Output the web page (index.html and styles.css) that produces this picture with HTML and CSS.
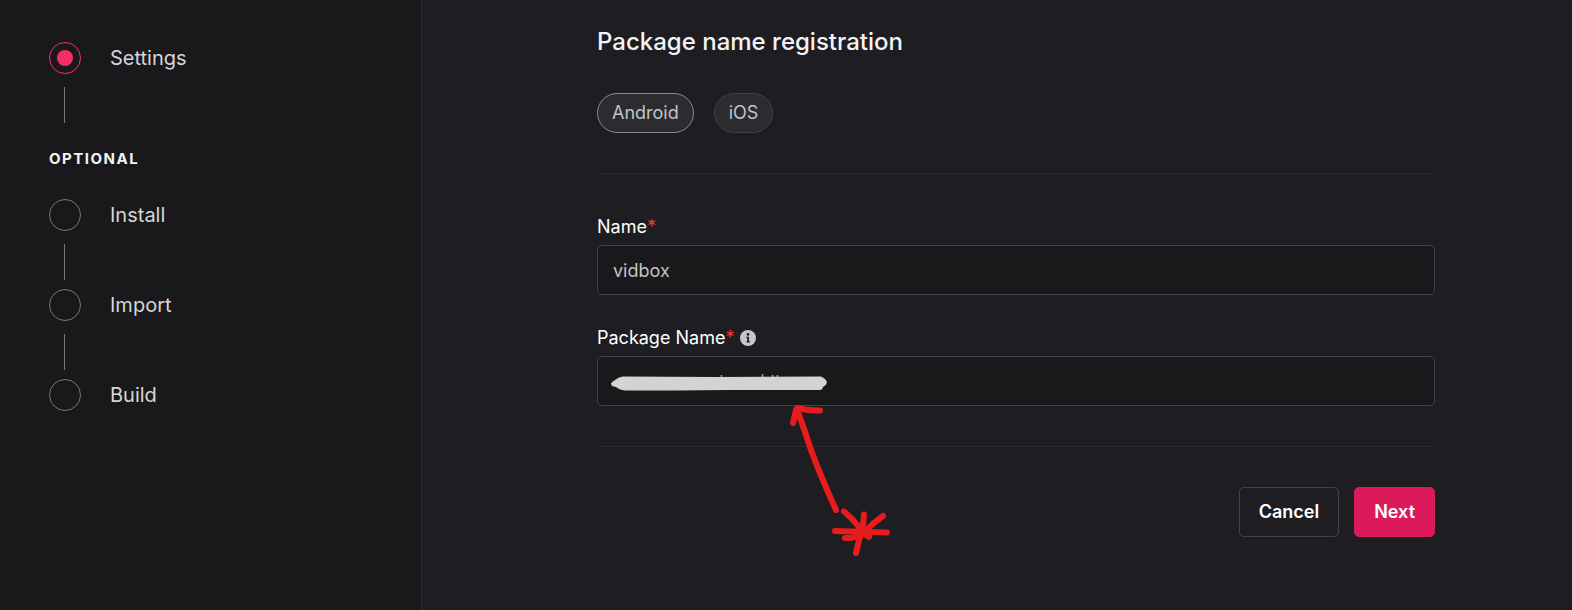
FILE: index.html
```html
<!DOCTYPE html>
<html lang="en">
<head>
<meta charset="utf-8">
<meta name="viewport" content="width=device-width, initial-scale=1">
<title>Package name registration</title>
<link rel="stylesheet" href="styles.css">
</head>
<body>
<div class="layout">
  <aside class="sidebar">
    <ol class="steps">
      <li class="step step-current" aria-current="step"><span class="step-dot"></span>Settings</li>
      <li class="step-line"></li>
    </ol>
    <h2 class="steps-title">OPTIONAL</h2>
    <ol class="steps">
      <li class="step"><span class="step-dot"></span>Install</li>
      <li class="step-line"></li>
      <li class="step"><span class="step-dot"></span>Import</li>
      <li class="step-line"></li>
      <li class="step"><span class="step-dot"></span>Build</li>
    </ol>
  </aside>
  <main class="main">
    <h1 class="title">Package name registration</h1>
    <div class="pills">
      <button type="button" class="pill pill-active" aria-pressed="true">Android</button>
      <button type="button" class="pill" aria-pressed="false">iOS</button>
    </div>
    <form class="form">
      <div class="field">
        <label class="label" for="name">Name<span class="required">*</span></label>
        <input class="input" id="name" type="text" value="vidbox">
      </div>
      <div class="field">
        <label class="label" for="package">Package Name<span class="required">*</span>
          <svg class="info" viewBox="0 0 16 16" aria-hidden="true">
            <circle cx="8" cy="8" r="8" fill="#c6c6ca"/>
            <circle cx="8" cy="4.400" r="1.300" fill="#1e1d22"/>
            <path d="M6.300 6.800h2.700v4.400h.9v1.300H6.500v-1.300h.7V8.100h-.9z" fill="#1e1d22"/>
          </svg>
        </label>
        <div class="marked">
          <input class="input" id="package" type="text">
          <svg class="marks" width="300" height="210" viewBox="0 0 300 210" aria-hidden="true">
            <path d="M124.500 19v3M165.500 18v3M175.500 19v3M180.500 19v3" stroke="#a5a5a8" stroke-width="1.500"/>
            <path d="M14 27.500Q15 25.500 18 24Q22 20.500 26 20.500L120 21L224 20.500Q227 21.500 229 24Q231 27 228 29.500L226 31Q225.500 34 223 34H130L80 34.500H28Q22 33.500 19 31Q14 30.500 14 27.500Z" fill="#d1d3d4"/>
            <g class="ink">
              <path d="M239 154C230 134 220 111 213 91C208 76 205 66 200 54"/>
              <path d="M196 67L199 54Q200 51 205 53Q212 54.500 223 54.500"/>
              <path d="M247 155.500Q256 163 262 171T272 181"/>
              <path d="M267 158.500Q266 176 262 184L259 197"/>
              <path d="M286 160Q276 167 267 176Q263 182 248 182"/>
              <path d="M238 175L290 176.500"/>
            </g>
          </svg>
        </div>
      </div>
      <div class="actions">
        <button type="button" class="button">Cancel</button>
        <button type="submit" class="button button-primary">Next</button>
      </div>
    </form>
  </main>
</div>
</body>
</html>
```
FILE: styles.css
```css
* {
  box-sizing: border-box;
}

body {
  margin: 0;
  background: #1e1d22;
  color: #f3f3f5;
  font-family: Inter, "Liberation Sans", sans-serif;
}

.layout {
  display: grid;
  grid-template-columns: 422px 1fr;
  min-height: 100vh;
}

.sidebar {
  padding: 42px 48px;
  background: #19191b;
  border-right: 1px solid #2d2d31;
}

.steps {
  margin: 0;
  padding: 0;
  list-style: none;
}

.step {
  display: flex;
  align-items: center;
  gap: 29px;
  padding-left: 1px;
  font-size: 20px;
  line-height: 32px;
  color: #d6d6d9;
}

.step-dot {
  width: 32px;
  height: 32px;
  border: 1px solid #77777a;
  border-radius: 50%;
}

.step-current .step-dot {
  padding: 7px;
  border-color: #f62e66;
  background: #f62e66 content-box;
}

.step-line {
  width: 1px;
  height: 36px;
  margin: 13px 16px 9px;
  background: #77777a;
}

.steps-title {
  margin: 26px 1px 30px;
  font-size: 15px;
  font-weight: 700;
  line-height: 20px;
  letter-spacing: 1.5px;
}

.main {
  padding: 24px 137px 24px 175px;
}

.title {
  margin: 0 0 33px;
  font-size: 24px;
  font-weight: 500;
  line-height: 36px;
}

.pills {
  display: flex;
  gap: 20px;
  padding-bottom: 40px;
  border-bottom: 1px solid #2d2d31;
}

.pill {
  height: 40px;
  padding: 0 14px;
  border: 1px solid #404044;
  border-radius: 20px;
  background: #2c2b30;
  color: #c3c3c7;
  font: 400 18px/24px Inter, "Liberation Sans", sans-serif;
}

.pill-active {
  border-color: #8b8b8f;
}

.form {
  display: grid;
  gap: 31px;
  padding-top: 41px;
}

.field {
  display: grid;
  gap: 6px;
}

.label {
  display: flex;
  align-items: center;
  color: #fff;
  font-size: 18px;
  font-weight: 400;
  line-height: 24px;
}

.required {
  color: #f3372f;
}

.info {
  width: 16px;
  height: 16px;
  margin-left: 6px;
}

.input {
  display: block;
  width: 100%;
  height: 50px;
  padding: 0 15px;
  border: 1px solid #434347;
  border-radius: 5px;
  background: #19191b;
  color: #c3c3c7;
  font: 400 18px/24px Inter, "Liberation Sans", sans-serif;
}

.marked {
  position: relative;
}

.marks {
  position: absolute;
  top: 0;
  left: 0;
  pointer-events: none;
}

.ink {
  fill: none;
  stroke: #e81c1c;
  stroke-width: 6px;
  stroke-linecap: round;
  stroke-linejoin: round;
}

.actions {
  display: flex;
  justify-content: flex-end;
  gap: 15px;
  margin-top: 9px;
  padding-top: 40px;
  border-top: 1px solid #2d2d31;
}

.button {
  height: 50px;
  padding: 0 19px;
  border: 1px solid #434347;
  border-radius: 5px;
  background: transparent;
  color: #fff;
  font: 600 18px/24px Inter, "Liberation Sans", sans-serif;
}

.button-primary {
  border-color: #dc1a59;
  background: #dc1a59;
}
```
